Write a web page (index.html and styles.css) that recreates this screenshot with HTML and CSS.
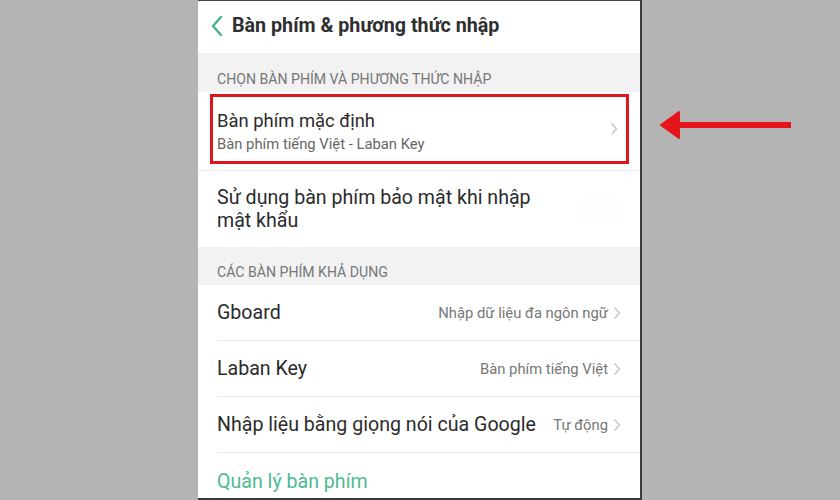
FILE: index.html
```html
<!DOCTYPE html>
<html lang="vi">
<head>
<meta charset="utf-8">
<link rel="stylesheet" href="styles.css">
</head>
<body>
<div class="stage">
  <div class="phone">
    <div class="header">
      <svg class="back" width="14" height="22" viewBox="0 0 14 22"><path d="M11 2 L3 11 L11 20" fill="none" stroke="#45b48c" stroke-width="2.4" stroke-linecap="round" stroke-linejoin="round"/></svg>
      <span class="title">Bàn phím &amp; phương thức nhập</span>
    </div>
    <div class="section s1">CHỌN BÀN PHÍM VÀ PHƯƠNG THỨC NHẬP</div>
    <div class="row r-default">
      <div class="highlight">
        <div class="texts">
          <div class="main">Bàn phím mặc định</div>
          <div class="sub">Bàn phím tiếng Việt - Laban Key</div>
        </div>
        <svg class="chev" width="8" height="14" viewBox="0 0 8 14"><path d="M1.5 1.5 L6.5 7 L1.5 12.5" fill="none" stroke="#c4c4c4" stroke-width="1.3"/></svg>
      </div>
    </div>
    <div class="row r-secure">
      <div class="main">Sử dụng bàn phím bảo mật khi nhập<br>mật khẩu</div>
      <div class="toggle"></div>
    </div>
    <div class="section s2">CÁC BÀN PHÍM KHẢ DỤNG</div>
    <div class="row item">
      <div class="main">Gboard</div>
      <div class="value">Nhập dữ liệu đa ngôn ngữ</div>
      <svg class="chev" width="8" height="14" viewBox="0 0 8 14"><path d="M1.5 1.5 L6.5 7 L1.5 12.5" fill="none" stroke="#c4c4c4" stroke-width="1.3"/></svg>
    </div>
    <div class="row item">
      <div class="main">Laban Key</div>
      <div class="value">Bàn phím tiếng Việt</div>
      <svg class="chev" width="8" height="14" viewBox="0 0 8 14"><path d="M1.5 1.5 L6.5 7 L1.5 12.5" fill="none" stroke="#c4c4c4" stroke-width="1.3"/></svg>
    </div>
    <div class="row item">
      <div class="main">Nhập liệu bằng giọng nói của Google</div>
      <div class="value">Tự động</div>
      <svg class="chev" width="8" height="14" viewBox="0 0 8 14"><path d="M1.5 1.5 L6.5 7 L1.5 12.5" fill="none" stroke="#c4c4c4" stroke-width="1.3"/></svg>
    </div>
    <div class="row item last">
      <div class="main link">Quản lý bàn phím</div>
    </div>
  </div>
  <svg class="arrow" width="134" height="30" viewBox="0 0 134 30"><path d="M2 14 L20 1 L20 27 Z" fill="#e5151b" stroke="#e5151b" stroke-width="2" stroke-linejoin="round"/><rect x="18" y="11" width="114" height="6" fill="#e5151b"/></svg>
</div>
</body>
</html>
```
FILE: styles.css
```css
html, body {
  margin: 0;
  padding: 0;
  background: #b4b4b4;
}
body {
  font-family: Roboto, "Noto Sans", "Liberation Sans", sans-serif;
  color: #2b2b2b;
}
.stage {
  display: flex;
  align-items: flex-start;
  width: 840px;
  height: 500px;
  overflow: hidden;
}
.phone {
  margin-left: 198px;
  width: 442px;
  height: 497px;
  background: #fff;
  border-top: 1px solid #444;
  border-right: 2px solid #3a3a3a;
  border-bottom: 2px solid #3a3a3a;
  display: flex;
  flex-direction: column;
  overflow: hidden;
}
.phone > * { flex-shrink: 0; }
.arrow {
  margin-left: 17px;
  margin-top: 111px;
}
.header {
  height: 52px;
  display: flex;
  align-items: center;
  padding-left: 12px;
  gap: 8px;
  box-sizing: border-box;
}
.back { margin-top: -2px; }
.title {
  font-size: 19.7px;
  font-weight: 700;
  color: #2f2f2f;
  margin-top: -3px;
}
.section {
  background: #f2f2f2;
  color: #777;
  font-size: 14.1px;
  padding-left: 19px;
  box-sizing: border-box;
  display: flex;
  align-items: flex-end;
}
.s1 { height: 39px; padding-bottom: 5px; }
.s2 { height: 38px; padding-bottom: 5px; }
.row {
  background: #fff;
  box-sizing: border-box;
}
.r-default {
  height: 79px;
  padding: 2px 11px 0 12px;
  border-bottom: 1px solid #eee;
}
.highlight {
  height: 70px;
  border: 3px solid #e0141b;
  box-sizing: border-box;
  display: flex;
  align-items: center;
  padding: 0 8px 0 4px;
}
.texts { flex: 1; margin-top: 4px; }
.main {
  font-size: 19.6px;
  color: #2b2b2b;
}
.r-default .main { font-size: 18.4px; line-height: 22px; }
.sub {
  font-size: 14.8px;
  color: #666;
  margin-top: 3px;
}
.r-secure {
  height: 76px;
  display: flex;
  align-items: center;
  padding-left: 19px;
}
.r-secure .main {
  line-height: 23px;
  flex: 1;
  margin-top: 0;
}
.toggle {
  width: 44px;
  height: 24px;
  margin-right: 18px;
  border-radius: 12px;
  background: #fdfdfd;
}
.item {
  height: 56px;
  margin-left: 19px;
  border-bottom: 1px solid #eee;
  display: flex;
  align-items: center;
  padding-right: 19px;
}
.item .main { flex: 1; white-space: nowrap; }
.item.last { border-bottom: none; }
.value {
  font-size: 14.8px;
  color: #777;
  margin-right: 5px;
}
.link { color: #4dbb90; }
```
